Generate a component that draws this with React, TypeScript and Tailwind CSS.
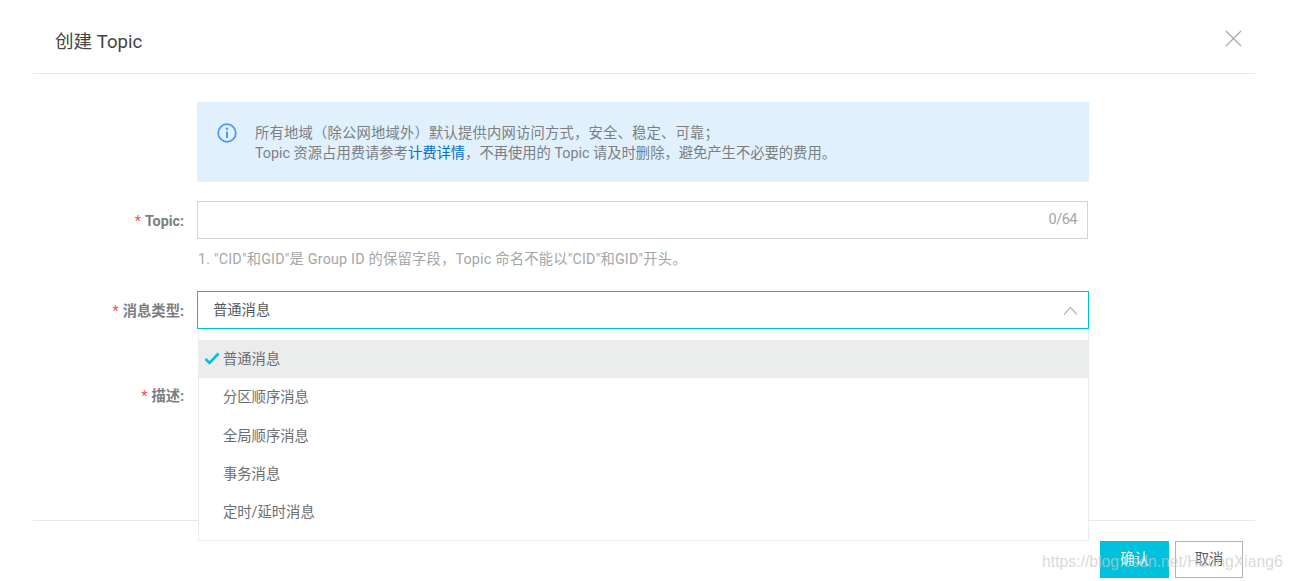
import React from "react";

const options = ["普通消息", "分区顺序消息", "全局顺序消息", "事务消息", "定时/延时消息"];

const Label = ({ text }: { text: string }) => (
  <label className="h-[38px] w-[151px] shrink-0 pt-[1px] text-right text-[14.3px] font-bold leading-[38px] text-[#7b7f82]">
    <span className="mr-1 font-normal text-[#ff4d4d]">*</span>
    {text}
  </label>
);

export default function App() {
  return (
    <main
      className="relative h-[581px] w-[1292px] overflow-hidden bg-white"
      style={{ fontFamily: 'Roboto, "Noto Sans CJK SC", sans-serif' }}
    >
      <div className="ml-[33px] w-[1222px]">
        {/* Header */}
        <div className="flex h-[74px] items-start justify-between border-b border-[#e6e7e8] pl-[22px] pr-[13px]">
          <h1 className="mt-[29px] text-[18.6px] leading-[26px] text-[#444444]">创建 Topic</h1>
          <svg className="mt-[30px]" width="17" height="17" viewBox="0 0 17 17" fill="none">
            <path d="M1 1 L16 16 M16 1 L1 16" stroke="#a6a8aa" strokeWidth="1.2" />
          </svg>
        </div>

        {/* Form */}
        <div className="h-[446px] pt-[28px]">
          <div className="ml-[164px] flex h-[80px] w-[892px] items-start bg-[#e1f0fd] pl-[20px] pt-[20px]">
            <svg className="mt-[1px] shrink-0" width="20" height="20" viewBox="0 0 20 20" fill="none">
              <circle cx="10" cy="10" r="8.8" stroke="#4e96f5" strokeWidth="1.7" />
              <path d="M10 8.5 V15" stroke="#4e96f5" strokeWidth="2" />
              <circle cx="10" cy="5.8" r="1.2" fill="#4e96f5" />
            </svg>
            <p className="ml-[18px] pt-[1px] text-[14.3px] leading-[20px] text-[#7b7f82]">
              <span className="tracking-[0.2px]">所有地域（除公网地域外）默认提供内网访问方式，安全、稳定、可靠；</span>
              <br />
              Topic 资源占用费请参考<span className="text-[#0070cc]">计费详情</span>，不再使用的 Topic 请及时删除，避免产生不必要的费用。
            </p>
          </div>

          <div className="mt-[19px] flex gap-[13px]">
            <Label text="Topic:" />
            <div className="flex h-[38px] w-[891px] items-center justify-end border border-[#d3d5d6] pr-[10px] text-[14.5px] tracking-[-0.5px] text-[#a3a6a8]">
              0/64
            </div>
          </div>
          <p className="ml-[165px] mt-[10px] text-[14.3px] leading-[20px] tracking-[0.2px] text-[#a3a6a8]">
            1. "CID"和GID"是 Group ID 的保留字段，Topic 命名不能以"CID"和GID"开头。
          </p>

          <div className="mt-[22px] flex gap-[13px]">
            <Label text="消息类型:" />
            <div className="relative w-[892px]">
              <div className="flex h-[38px] items-center justify-between border border-[#00c1de] pl-[15px] pr-[10px] text-[14.3px] text-[#55585a]">
                <span className="pt-[1px]">普通消息</span>
                <svg width="15" height="9" viewBox="0 0 15 9" fill="none">
                  <path d="M1 8.5 L7.5 1.5 L14 8.5" stroke="#b9bbbd" strokeWidth="1.4" />
                </svg>
              </div>
              {/* Open dropdown */}
              <ul className="absolute left-[1px] right-0 top-full z-10 h-[212px] border-b border-l border-r border-[#ececec] bg-white pt-[11px] text-[14.3px] text-[#6a6e71]">
                {options.map((option, i) => (
                  <li
                    key={option}
                    className={`relative flex h-[38.3px] items-center pl-[24px] pt-[1px] ${i === 0 ? "bg-[#ebecec]" : ""}`}
                  >
                    {i === 0 && (
                      <svg className="absolute left-[5px] top-[12px]" width="16" height="13" viewBox="0 0 16 13" fill="none">
                        <path d="M1.5 7 L5.5 11 L14.5 1.5" stroke="#00c1de" strokeWidth="2.6" />
                      </svg>
                    )}
                    {option}
                  </li>
                ))}
              </ul>
            </div>
          </div>

          <div className="mt-[47px] flex gap-[13px]">
            <Label text="描述:" />
          </div>
        </div>

        {/* Footer */}
        <div className="flex justify-end gap-[6px] border-t border-[#e6e7e8] pr-[12px] pt-[20px]">
          <button className="h-[37px] w-[69px] bg-[#00c1de] text-[14.3px] text-white">确认</button>
          <button className="h-[37px] w-[68px] border border-[#b3b3b3] bg-white text-[14.3px] text-[#55585a]">取消</button>
        </div>
      </div>

      {/* Blog watermark */}
      <span
        className="absolute left-[1042px] top-[551px] z-20 text-[15.75px] leading-[22px] text-[#c8c8c8]/70"
        style={{ fontFamily: '"Liberation Sans", sans-serif' }}
      >
        https://blog.csdn.net/HuangXiang6
      </span>
    </main>
  );
}
